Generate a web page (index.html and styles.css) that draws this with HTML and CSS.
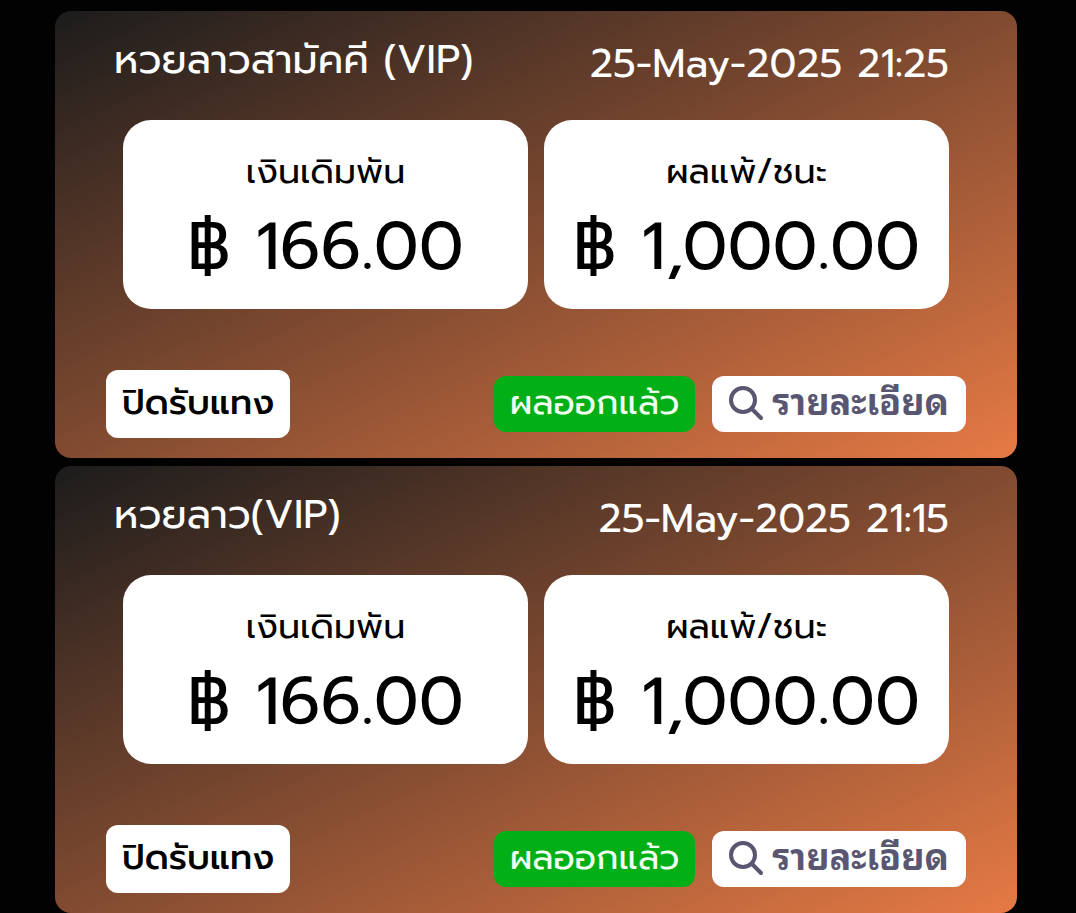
FILE: index.html
```
<!DOCTYPE html>
<html lang="th">
<head>
  <meta charset="UTF-8">
  <meta name="viewport" content="width=device-width, initial-scale=1.0">
  <title>โพยหวย</title>
  <link rel="stylesheet" href="styles.css">
</head>
<body>
  <main class="ticket-list">
    <!-- Ticket 1 -->
    <section class="ticket">
      <header class="ticket-header">
        <h2 class="ticket-name">หวยลาวสามัคคี (VIP)</h2>
        <time class="ticket-date" datetime="2025-05-25T21:25">25-May-2025 21:25</time>
      </header>
      <div class="amounts">
        <div class="amount-box">
          <span class="amount-label">เงินเดิมพัน</span>
          <span class="amount-value">฿ 166.00</span>
        </div>
        <div class="amount-box">
          <span class="amount-label">ผลแพ้/ชนะ</span>
          <span class="amount-value">฿ 1,000.00</span>
        </div>
      </div>
      <footer class="ticket-footer">
        <span class="badge badge-closed">ปิดรับแทง</span>
        <span class="badge badge-result">ผลออกแล้ว</span>
        <button type="button" class="detail-button">
          <svg class="search-icon" viewBox="0 0 36 36" aria-hidden="true">
            <circle cx="15" cy="15" r="12"/>
            <path d="M24 24 L33 33"/>
          </svg>
          <span class="detail-text">รายละเอียด</span>
        </button>
      </footer>
    </section>

    <!-- Ticket 2 -->
    <section class="ticket">
      <header class="ticket-header">
        <h2 class="ticket-name">หวยลาว(VIP)</h2>
        <time class="ticket-date" datetime="2025-05-25T21:15">25-May-2025 21:15</time>
      </header>
      <div class="amounts">
        <div class="amount-box">
          <span class="amount-label">เงินเดิมพัน</span>
          <span class="amount-value">฿ 166.00</span>
        </div>
        <div class="amount-box">
          <span class="amount-label">ผลแพ้/ชนะ</span>
          <span class="amount-value">฿ 1,000.00</span>
        </div>
      </div>
      <footer class="ticket-footer">
        <span class="badge badge-closed">ปิดรับแทง</span>
        <span class="badge badge-result">ผลออกแล้ว</span>
        <button type="button" class="detail-button">
          <svg class="search-icon" viewBox="0 0 36 36" aria-hidden="true">
            <circle cx="15" cy="15" r="12"/>
            <path d="M24 24 L33 33"/>
          </svg>
          <span class="detail-text">รายละเอียด</span>
        </button>
      </footer>
    </section>
  </main>
</body>
</html>
```
FILE: styles.css
```
* {
  box-sizing: border-box;
}

body {
  margin: 0;
  background-color: #020202;
  font-family: Prompt, Lato, "Noto Sans Thai", "Noto Sans", sans-serif;
}

.ticket-list {
  display: flex;
  flex-direction: column;
  gap: 8px;
  padding: 11px 59px 0 55px;
}

.ticket {
  padding: 19px 51px 20px;
  border-radius: 16px;
  background: linear-gradient(to bottom right, #1c1c1c, #e67a45);
}

/* Name on the left, date on the right */
.ticket-header {
  display: flex;
  justify-content: space-between;
  padding: 0 17px 0 8px;
  color: #fff;
  font-size: 40px;
  line-height: 60px;
}

.ticket-name {
  margin: 0;
  font-size: inherit;
  font-weight: 400;
}

.ticket-date {
  padding-top: 4px;
}

.amounts {
  display: grid;
  grid-template-columns: 1fr 1fr;
  gap: 16px;
  margin-top: 26px;
  padding: 0 17px;
}

.amount-box {
  display: flex;
  flex-direction: column;
  align-items: center;
  padding: 26px 0 13px;
  border-radius: 28px;
  background-color: #fff;
  color: #000;
}

.amount-label {
  font-size: 35px;
  line-height: 52px;
}

.amount-value {
  font-size: 67px;
  line-height: 98px;
}

.ticket-footer {
  display: flex;
  align-items: center;
  margin-top: 61px;
}

.badge,
.detail-button {
  border-radius: 12px;
  font-size: 35px;
  line-height: 54px;
}

.badge-closed {
  margin-right: auto;
  padding: 6px 16px 8px;
  background-color: #fff;
  color: #000;
  font-weight: 500;
}

.badge-result {
  margin-right: 17px;
  padding: 0 16px 2px;
  background-color: #02af16;
  color: #f0fff0;
}

.detail-button {
  display: flex;
  align-items: center;
  gap: 8px;
  padding: 0 17px 2px 16px;
  border: none;
  background-color: #fff;
  color: #585670;
  font-family: "Noto Sans Thai Looped", "Noto Looped Thai", Loma, Garuda, Waree, Sarabun, sans-serif;
  font-size: 36px;
  font-weight: 700;
  cursor: pointer;
}

.detail-text {
  padding-bottom: 8px;
  line-height: 46px;
}

.search-icon {
  width: 36px;
  height: 36px;
  fill: none;
  stroke: #585670;
  stroke-width: 4;
  stroke-linecap: round;
}
```
